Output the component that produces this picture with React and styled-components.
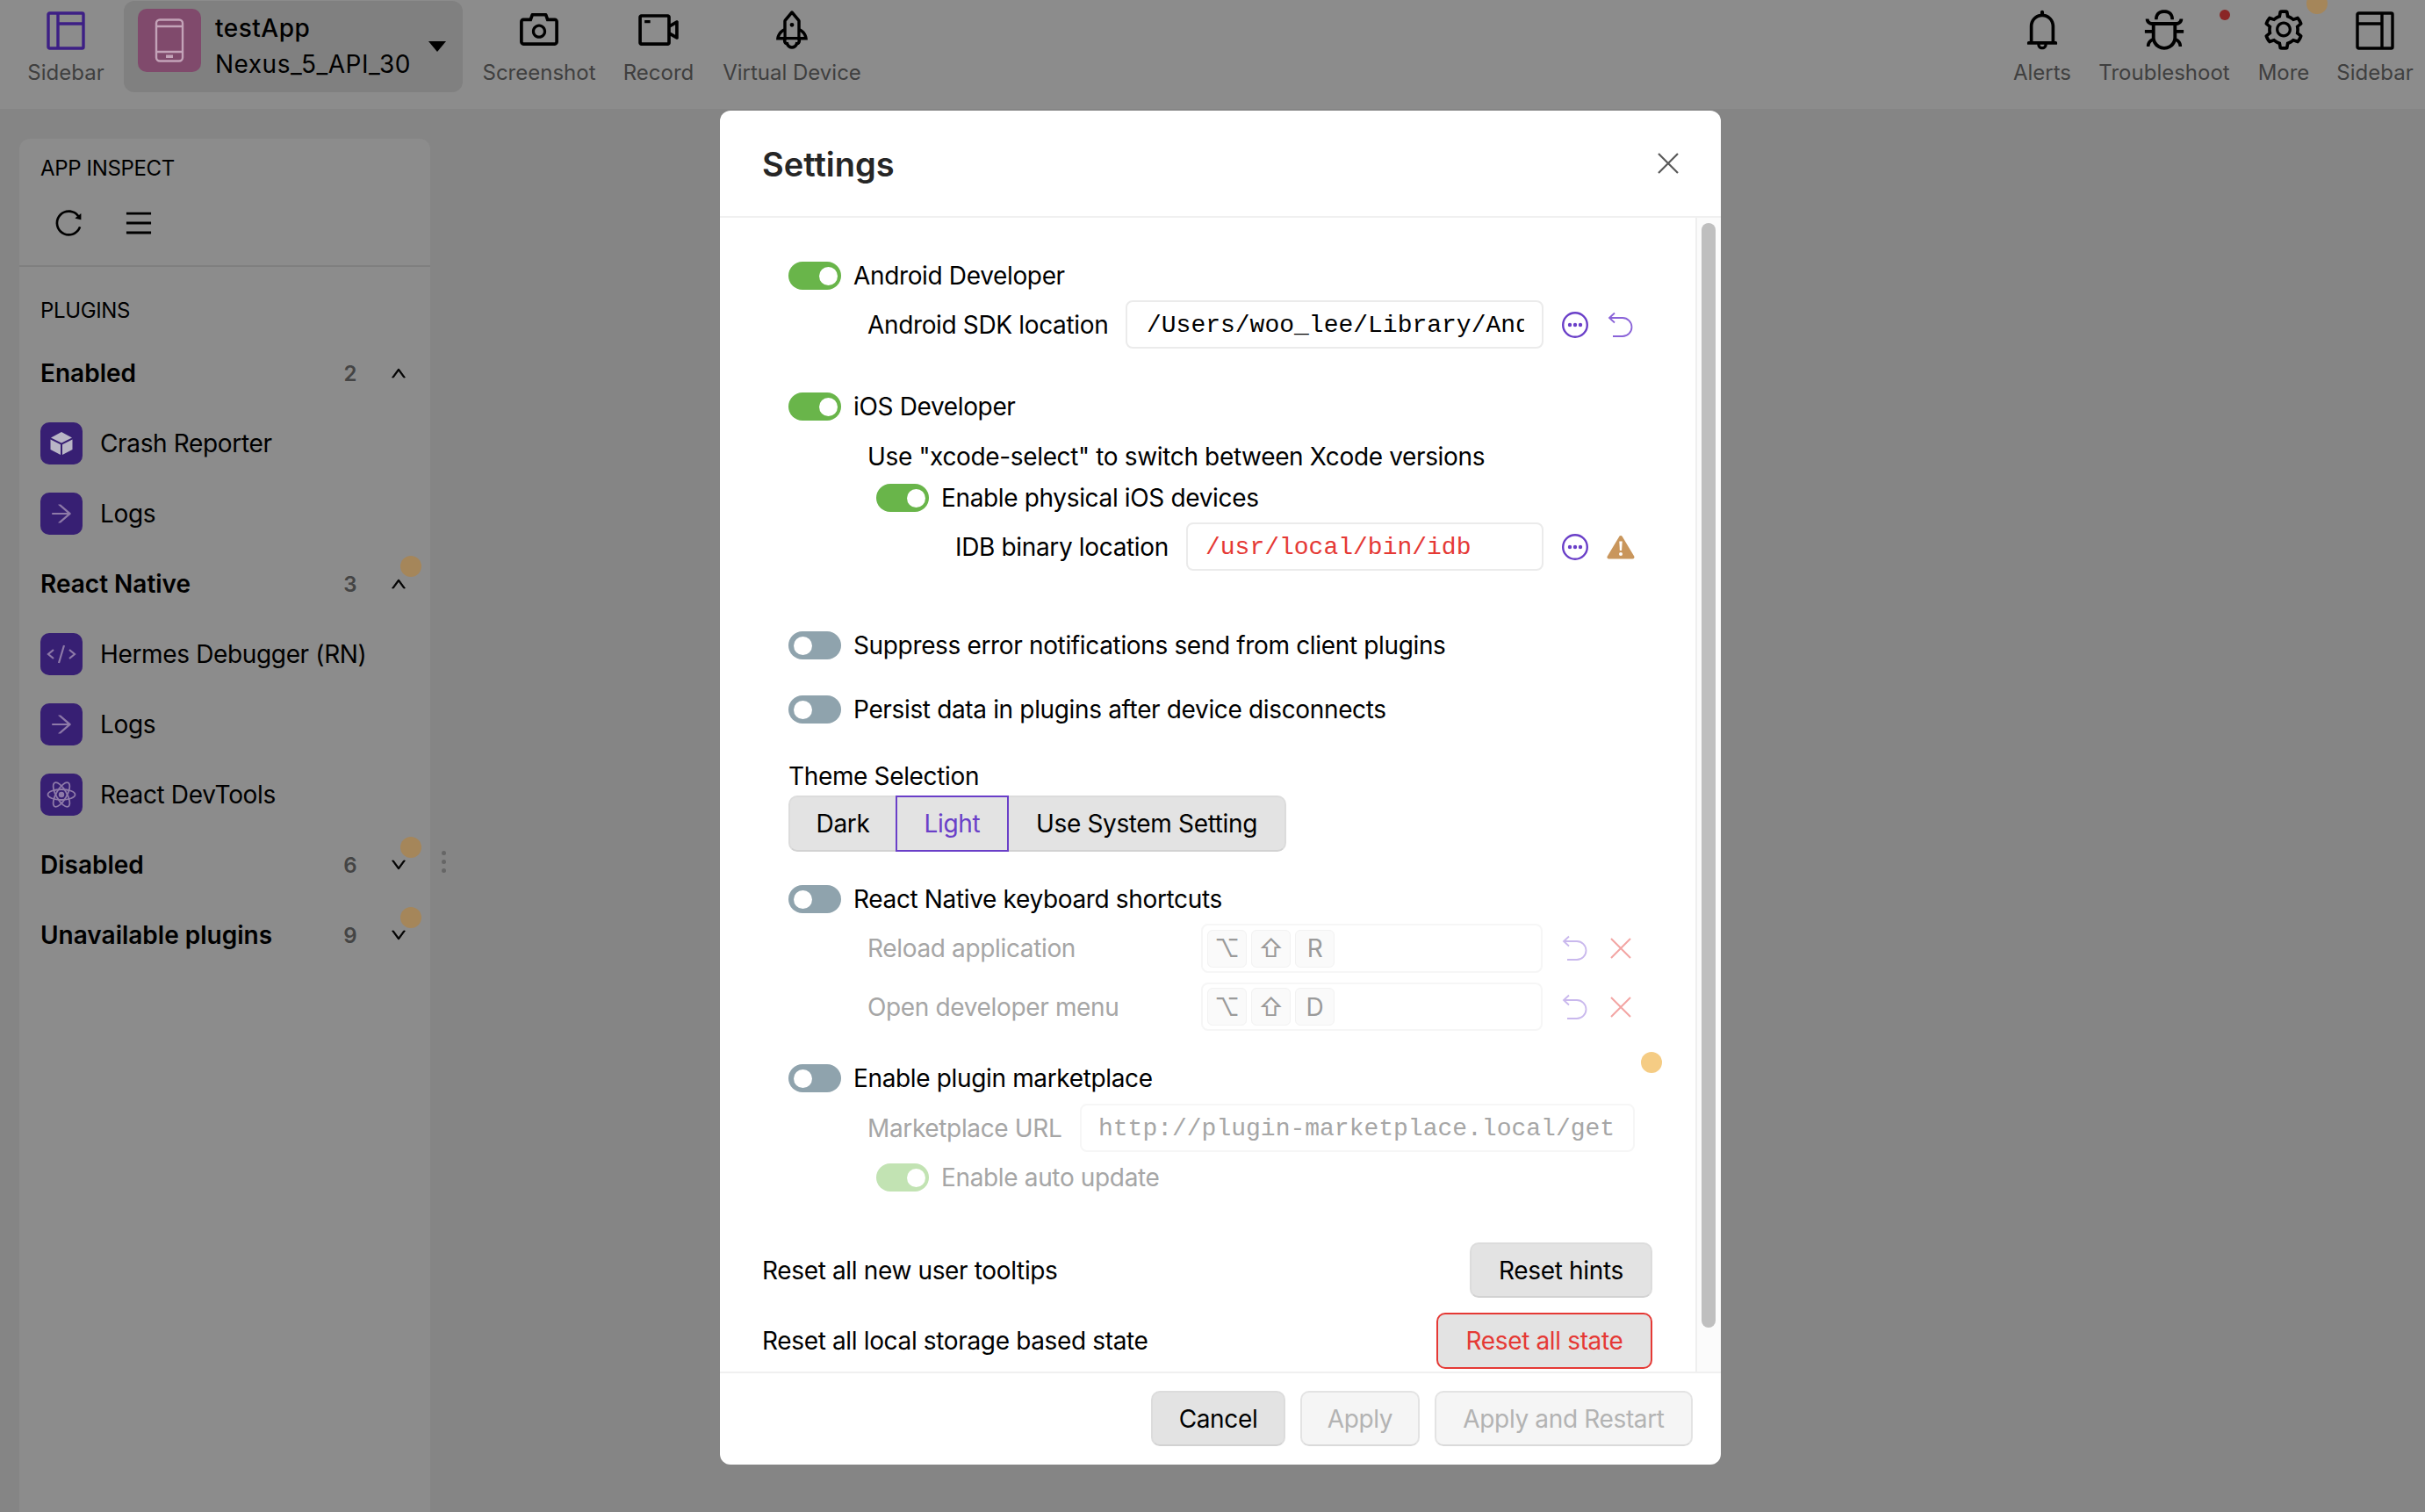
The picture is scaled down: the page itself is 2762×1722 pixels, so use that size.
import React from "react";
import styled, { createGlobalStyle } from "styled-components";
import {
  AiOutlineCamera, AiOutlineVideoCamera, AiOutlineRocket, AiOutlineBell, AiOutlineBug,
  AiOutlineSetting, AiOutlineReload, AiOutlineMenu, AiOutlineUp, AiOutlineDown,
  AiOutlineArrowRight,
} from "react-icons/ai";

const Global = createGlobalStyle`
  html, body { margin: 0; padding: 0; }
  body { width: 2762px; height: 1722px; overflow: hidden; background: #858585; font-family: Inter, "Noto Sans", sans-serif; color: #000; letter-spacing: -0.35px; }
  * { box-sizing: border-box; }
`;

const Page = styled.div`
  position: relative;
  width: 2762px;
  height: 1722px;
  display: flex;
  flex-direction: column;
`;

const Toolbar = styled.header`
  height: 124px;
  flex: none;
  background: #8c8c8c;
  display: flex;
  align-items: flex-start;
`;
const ToolGroup = styled.div`
  display: flex;
  align-items: flex-start;
  margin-left: ${(p) => p.$ml || 0}px;
`;
const ToolButton = styled.div`
  width: ${(p) => p.$w}px;
  margin-left: ${(p) => p.$ml || 0}px;
  margin-right: ${(p) => p.$mr || 0}px;
  height: 100px;
  display: flex;
  flex-direction: column;
  align-items: center;
  padding-top: ${(p) => p.$pt ?? 8}px;
  font-size: 24px;
  color: #3f3f3f;
  letter-spacing: 0;
  white-space: nowrap;
  position: relative;
  svg { display: block; color: ${(p) => p.$icon || "#000"}; }
`;
const ToolLabel = styled.span`
  position: absolute;
  top: 68px;
  line-height: 30px;
`;
const DevicePill = styled.div`
  width: 386px;
  height: 104px;
  margin: 1px 0 0 0;
  background: #808080;
  border-radius: 12px;
  display: flex;
  align-items: center;
  padding: 0 19px 0 16px;
  position: relative;
`;
const DeviceIcon = styled.div`
  width: 72px;
  height: 72px;
  margin-bottom: 14px;
  border-radius: 10px;
  background: #804a6c;
  display: flex;
  align-items: center;
  justify-content: center;
`;
const DeviceText = styled.div`
  margin-left: 16px;
  flex: 1;
  font-size: 28px;
  line-height: 41px;
  letter-spacing: 0.5px;
`;
const DeviceName = styled.div`
  font-weight: 500;
`;
const Caret = styled.div`
  width: 0;
  height: 0;
  border-left: 10px solid transparent;
  border-right: 10px solid transparent;
  border-top: 12px solid #000;
`;
const Spacer = styled.div`
  flex: 1;
`;
const Dot = styled.span`
  position: absolute;
  width: ${(p) => p.$d}px;
  height: ${(p) => p.$d}px;
  left: ${(p) => p.$x}px;
  top: ${(p) => p.$y}px;
  border-radius: 50%;
  background: ${(p) => p.$c};
`;

const Main = styled.main`
  flex: 1;
  padding: 34px 0 0 22px;
  display: flex;
`;
const Sidebar = styled.aside`
  width: 468px;
  background: #8c8c8c;
  border-radius: 12px 12px 0 0;
  position: relative;
`;
const SideHead = styled.div`
  height: 146px;
  border-bottom: 2px solid #7f7f7f;
  padding: 16px 24px 0;
`;
const Caption = styled.div`
  font-size: 24px;
  line-height: 36px;
  color: #000;
`;
const HeadIcons = styled.div`
  display: flex;
  gap: 44px;
  margin: 26px 0 0 14px;
  svg { display: block; }
`;
const PluginList = styled.div`
  padding: 32px 24px 0;
`;
const SectionRow = styled.div`
  height: 80px;
  display: flex;
  align-items: center;
  font-size: 28px;
  font-weight: 600;
  letter-spacing: 0;
  position: relative;
  margin-top: ${(p) => p.$mt || 0}px;
`;
const SectionName = styled.span`
  flex: 1;
`;
const Count = styled.span`
  font-size: 24px;
  font-weight: 600;
  color: #444;
  width: 16px;
  text-align: center;
  margin-right: 37px;
`;
const Chev = styled.span`
  width: 20px;
  margin-right: 2px;
  display: flex;
  justify-content: center;
  svg { display: block; stroke: currentColor; stroke-width: 40px; }
`;
const PluginRow = styled.div`
  height: 80px;
  display: flex;
  align-items: center;
  font-size: 28px;
  color: #000;
`;
const PluginIcon = styled.div`
  width: 48px;
  height: 48px;
  border-radius: 10px;
  background: #371f73;
  margin-right: 20px;
  display: flex;
  align-items: center;
  justify-content: center;
  svg { display: block; }
`;
const DragDots = styled.div`
  position: absolute;
  left: 481px;
  top: 811px;
  display: flex;
  flex-direction: column;
  gap: 5px;
  span { width: 5px; height: 5px; border-radius: 50%; background: #666; }
`;

const Modal = styled.section`
  position: absolute;
  left: 820px;
  top: 126px;
  width: 1140px;
  height: 1542px;
  background: #fff;
  border-radius: 12px;
  display: flex;
  flex-direction: column;
  overflow: hidden;
`;
const ModalHead = styled.div`
  height: 122px;
  flex: none;
  border-bottom: 2px solid #f0f0f0;
  padding: 2px 48px 0;
  display: flex;
  align-items: center;
  justify-content: space-between;
`;
const Title = styled.h2`
  margin: 0;
  font-size: 38px;
  font-weight: 600;
  color: #262626;
  line-height: 50px;
  letter-spacing: 0;
`;
const CloseBtn = styled.div`
  display: flex;
  margin: 0 0 3px 0;
  svg { display: block; }
`;
const ModalBody = styled.div`
  flex: 1;
  min-height: 0;
  display: flex;
  overflow: hidden;
`;
const Content = styled.div`
  flex: 1;
  padding-left: 48px;
`;
const ScrollTrack = styled.div`
  width: 29px;
  background: #fbfbfb;
  border-left: 2px solid #efefef;
  padding: 6px 5px 0 5px;
`;
const ScrollThumb = styled.div`
  width: 16px;
  height: 1258px;
  border-radius: 8px;
  background: #bfbfbf;
`;
const Row = styled.div`
  display: flex;
  align-items: center;
  margin-top: ${(p) => p.$mt}px;
  height: ${(p) => p.$h || 32}px;
  padding-left: ${(p) => 30 + (p.$pl || 0)}px;
  font-size: 28px;
  line-height: 32px;
  color: ${(p) => (p.$muted ? "#a6a6a6" : "#000")};
  white-space: nowrap;
`;
const Switch = styled.span`
  width: 60px;
  height: 32px;
  border-radius: 16px;
  flex: none;
  margin-right: 14px;
  background: ${(p) => (p.$faded ? "#c2e3b3" : p.$on ? "#69b54a" : "#8fa3ad")};
  display: flex;
  align-items: center;
  justify-content: ${(p) => (p.$on ? "flex-end" : "flex-start")};
  padding: ${(p) => (p.$on ? "0 4px 0 0" : "0 0 0 6px")};
  &::after {
    content: "";
    width: 21px;
    height: 21px;
    border-radius: 50%;
    background: #fff;
  }
`;
const FieldLabel = styled.span`
  width: ${(p) => p.$w}px;
  flex: none;
`;
const Input = styled.div`
  width: ${(p) => p.$w}px;
  height: 100%;
  flex: none;
  border: 2px solid ${(p) => (p.$muted ? "#f6f6f6" : "#ebebeb")};
  border-radius: 8px;
  padding: 3px ${(p) => p.$pr ?? 20}px 0 ${(p) => p.$pl ?? 20}px;
  display: flex;
  align-items: center;
  font-family: "Liberation Mono", monospace;
  font-size: 28px;
  letter-spacing: 0;
  overflow: hidden;
  color: ${(p) => p.$c || "#000"};
`;
const Clip = styled.span`
  display: block;
  overflow: hidden;
  white-space: nowrap;
  width: 100%;
`;
const IconSlot = styled.span`
  width: 32px;
  height: 32px;
  margin-left: ${(p) => p.$ml}px;
  flex: none;
  display: flex;
  align-items: center;
  justify-content: center;
  opacity: ${(p) => p.$o ?? 1};
  svg { display: block; }
`;
const Seg = styled.div`
  display: flex;
  height: 64px;
  margin: ${(p) => p.$mt}px 0 0 30px;
  width: 567px;
  background: #e3e3e3;
  border: 2px solid #dcdcdc;
  border-bottom-color: #d2d2d2;
  border-radius: 10px;
  font-size: 28px;
`;
const SegItem = styled.div`
  display: flex;
  align-items: center;
  justify-content: center;
  flex: ${(p) => (p.$w ? `0 0 ${p.$w}px` : "1")};
  margin: ${(p) => (p.$active ? "-2px 0" : "0")};
  border: ${(p) => (p.$active ? "2px solid #6a3fc8" : "0")};
  color: ${(p) => (p.$active ? "#6a3fc8" : "#000")};
`;
const KeyInput = styled.div`
  width: 389px;
  height: 100%;
  flex: none;
  border: 2px solid #f6f6f6;
  border-radius: 8px;
  padding-left: 5px;
  display: flex;
  align-items: center;
  gap: 5px;
`;
const KeyCap = styled.span`
  width: 45px;
  height: 43px;
  border-radius: 6px;
  background: #fafafa;
  border: 1px solid #f2f2f2;
  display: flex;
  align-items: center;
  justify-content: center;
  font-size: 28px;
  color: #9a9a9a;
  font-family: Inter, "DejaVu Sans", sans-serif;
`;
const ResetRow = styled.div`
  display: flex;
  align-items: center;
  justify-content: space-between;
  margin-top: ${(p) => p.$mt}px;
  height: ${(p) => p.$h}px;
  padding-right: 49px;
  font-size: 28px;
`;
const Button = styled.div`
  height: ${(p) => p.$h || 63}px;
  width: ${(p) => p.$w}px;
  flex: none;
  border-radius: 10px;
  display: flex;
  align-items: center;
  justify-content: center;
  font-size: 28px;
  white-space: nowrap;
  background: ${(p) => (p.$disabled ? "#f5f5f5" : "#e3e3e3")};
  border: 2px solid ${(p) => (p.$danger ? "#e53935" : p.$disabled ? "#e3e3e3" : "#dcdcdc")};
  border-bottom-color: ${(p) => (p.$danger ? "#e53935" : p.$disabled ? "#dadada" : "#d2d2d2")};
  color: ${(p) => (p.$danger ? "#e53935" : p.$disabled ? "#b3b3b3" : "#000")};
`;
const Footer = styled.div`
  height: 106px;
  flex: none;
  border-top: 2px solid #f0f0f0;
  display: flex;
  justify-content: flex-end;
  gap: 17px;
  padding: 20px 32px 0 0;
`;

const SidebarGlyph = ({ right, color }) => (
  <svg width="44" height="44" viewBox="0 0 44 44" fill="none" stroke={color} strokeWidth="3.4">
    <rect x="2" y="2" width="40" height="40" rx="1.5" />
    {right ? <path d="M30 2v40M2 14h28" /> : <path d="M13 2v40M13 14h29" />}
  </svg>
);
const Phone = () => (
  <svg width="34" height="50" viewBox="0 0 34 50" fill="none" stroke="#c3a3b8" strokeWidth="2.4">
    <rect x="2" y="1.5" width="30" height="47" rx="4" />
    <path d="M2 9h30M2 38h30" />
    <rect x="13" y="41.5" width="8" height="3.5" fill="#c3a3b8" stroke="none" />
  </svg>
);
const Cube = () => (
  <svg width="28" height="28" viewBox="0 0 28 28" fill="#b9b6c6">
    <path d="M14 1 26 7.5 14 13.5 2 7.5Z" />
    <path d="M1.5 9.5 13 15.3V27L1.5 21Z" />
    <path d="M26.5 9.5 15 15.3V27L26.5 21Z" />
  </svg>
);
const CodeGlyph = () => (
  <svg width="34" height="22" viewBox="0 0 34 22" fill="none" stroke="#8e7aa8" strokeWidth="2.2">
    <path d="M8 6 2 11l6 5M26 6l6 5-6 5M20 1l-6 20" />
  </svg>
);
const Atom = () => (
  <svg width="34" height="34" viewBox="0 0 34 34" fill="none" stroke="#8e7aa8" strokeWidth="1.8">
    <ellipse cx="17" cy="17" rx="15.5" ry="6" />
    <ellipse cx="17" cy="17" rx="15.5" ry="6" transform="rotate(60 17 17)" />
    <ellipse cx="17" cy="17" rx="15.5" ry="6" transform="rotate(120 17 17)" />
    <circle cx="17" cy="17" r="3.2" fill="#8e7aa8" stroke="none" />
  </svg>
);
const MoreCircle = () => (
  <svg width="30" height="30" viewBox="0 0 30 30">
    <circle cx="15" cy="15" r="13.8" fill="none" stroke="#6a3fc8" strokeWidth="2.4" />
    <circle cx="9" cy="15" r="2.2" fill="#6a3fc8" />
    <circle cx="15" cy="15" r="2.2" fill="#6a3fc8" />
    <circle cx="21" cy="15" r="2.2" fill="#6a3fc8" />
  </svg>
);
const UndoGlyph = () => (
  <svg width="30" height="30" viewBox="0 0 30 30" fill="none" stroke="#8a63d8" strokeWidth="1.8">
    <path d="M2 7H17a10.5 10.5 0 0 1 0 21H6" />
    <path d="M8 1.5 2 7l6 5.5" />
  </svg>
);
const Cross = ({ w, h, color, sw }) => (
  <svg width={w} height={h} viewBox={`0 0 ${w} ${h}`} fill="none" stroke={color} strokeWidth={sw}>
    <path d={`M1 1 ${w - 1} ${h - 1}M${w - 1} 1 1 ${h - 1}`} />
  </svg>
);
const WarnGlyph = () => (
  <svg width="32" height="28" viewBox="0 0 32 28">
    <path d="M16 3 2.5 25.5h27Z" fill="#c9965c" stroke="#c9965c" strokeWidth="4" strokeLinejoin="round" />
    <path d="M14.3 7.5h3.4l-.6 10.5h-2.2Z" fill="#fff" />
    <circle cx="16" cy="22" r="2" fill="#fff" />
  </svg>
);

const PLUGIN_ICON = { fill: "#8e7aa8", size: 30 };

const App = () => (
  <Page>
    <Global />
    <Toolbar>
      <ToolGroup $ml={32}>
        <ToolButton $w={86} $mr={23} $pt={13}>
          <SidebarGlyph color="#3d1f85" />
          <ToolLabel>Sidebar</ToolLabel>
        </ToolButton>
        <DevicePill>
          <DeviceIcon><Phone /></DeviceIcon>
          <DeviceText>
            <DeviceName>testApp</DeviceName>
            <div>Nexus_5_API_30</div>
          </DeviceText>
          <Caret />
        </DevicePill>
        <ToolButton $w={128} $ml={23} $mr={32}>
          <AiOutlineCamera size={52} />
          <ToolLabel>Screenshot</ToolLabel>
        </ToolButton>
        <ToolButton $w={80} $mr={34}>
          <AiOutlineVideoCamera size={52} />
          <ToolLabel>Record</ToolLabel>
        </ToolButton>
        <ToolButton $w={156}>
          <AiOutlineRocket size={52} />
          <ToolLabel>Virtual Device</ToolLabel>
        </ToolButton>
      </ToolGroup>
      <Spacer />
      <ToolGroup>
        <ToolButton $w={68} $mr={31}>
          <AiOutlineBell size={52} />
          <ToolLabel>Alerts</ToolLabel>
        </ToolButton>
        <ToolButton $w={148} $mr={33}>
          <AiOutlineBug size={52} />
          <ToolLabel>Troubleshoot</ToolLabel>
        </ToolButton>
        <ToolButton $w={58} $mr={32}>
          <AiOutlineSetting size={52} />
          <ToolLabel>More</ToolLabel>
        </ToolButton>
        <ToolButton $w={86} $mr={14} $pt={13}>
          <SidebarGlyph right color="#000" />
          <ToolLabel>Sidebar</ToolLabel>
        </ToolButton>
      </ToolGroup>
      <Dot $d={12} $x={2528} $y={11} $c="#8a2626" />
      <Dot $d={24} $x={2627} $y={-8} $c="#a5865a" />
    </Toolbar>
    <Main>
      <Sidebar>
        <SideHead>
          <Caption>APP INSPECT</Caption>
          <HeadIcons>
            <AiOutlineReload size={36} />
            <AiOutlineMenu size={36} />
          </HeadIcons>
        </SideHead>
        <PluginList>
          <Caption>PLUGINS</Caption>
          <SectionRow $mt={13}>
            <SectionName>Enabled</SectionName><Count>2</Count><Chev><AiOutlineUp size={20} /></Chev>
          </SectionRow>
          <PluginRow><PluginIcon><Cube /></PluginIcon>Crash Reporter</PluginRow>
          <PluginRow><PluginIcon><AiOutlineArrowRight color={PLUGIN_ICON.fill} size={PLUGIN_ICON.size} /></PluginIcon>Logs</PluginRow>
          <SectionRow>
            <SectionName>React Native</SectionName><Count>3</Count><Chev><AiOutlineUp size={20} /></Chev>
            <Dot $d={24} $x={410} $y={8} $c="#a5865a" />
          </SectionRow>
          <PluginRow><PluginIcon><CodeGlyph /></PluginIcon>Hermes Debugger (RN)</PluginRow>
          <PluginRow><PluginIcon><AiOutlineArrowRight color={PLUGIN_ICON.fill} size={PLUGIN_ICON.size} /></PluginIcon>Logs</PluginRow>
          <PluginRow><PluginIcon><Atom /></PluginIcon>React DevTools</PluginRow>
          <SectionRow>
            <SectionName>Disabled</SectionName><Count>6</Count><Chev><AiOutlineDown size={20} /></Chev>
            <Dot $d={24} $x={410} $y={8} $c="#a5865a" />
          </SectionRow>
          <SectionRow>
            <SectionName>Unavailable plugins</SectionName><Count>9</Count><Chev><AiOutlineDown size={20} /></Chev>
            <Dot $d={24} $x={410} $y={8} $c="#a5865a" />
          </SectionRow>
        </PluginList>
        <DragDots><span /><span /><span /></DragDots>
      </Sidebar>
    </Main>

    <Modal>
      <ModalHead>
        <Title>Settings</Title>
        <CloseBtn><Cross w={24} h={24} color="#595959" sw={2.2} /></CloseBtn>
      </ModalHead>
      <ModalBody>
        <Content>
          <Row $mt={50}><Switch $on />Android Developer</Row>
          <Row $mt={12} $h={55} $pl={90}>
            <FieldLabel $w={294}>Android SDK location</FieldLabel>
            <Input $w={476} $pl={22}><Clip>/Users/woo_lee/Library/Android/sdk</Clip></Input>
            <IconSlot $ml={20}><MoreCircle /></IconSlot>
            <IconSlot $ml={20}><UndoGlyph /></IconSlot>
          </Row>
          <Row $mt={50}><Switch $on />iOS Developer</Row>
          <Row $mt={25} $pl={90}>Use "xcode-select" to switch between Xcode versions</Row>
          <Row $mt={15} $pl={100}><Switch $on />Enable physical iOS devices</Row>
          <Row $mt={12} $h={55} $pl={190}>
            <FieldLabel $w={263}>IDB binary location</FieldLabel>
            <Input $w={407} $c="#e53935"><Clip>/usr/local/bin/idb</Clip></Input>
            <IconSlot $ml={20}><MoreCircle /></IconSlot>
            <IconSlot $ml={20}><WarnGlyph /></IconSlot>
          </Row>
          <Row $mt={69}><Switch />Suppress error notifications send from client plugins</Row>
          <Row $mt={41}><Switch />Persist data in plugins after device disconnects</Row>
          <Row $mt={44}>Theme Selection</Row>
          <Seg $mt={6}>
            <SegItem $w={120}>Dark</SegItem>
            <SegItem $w={129} $active>Light</SegItem>
            <SegItem>Use System Setting</SegItem>
          </Seg>
          <Row $mt={38}><Switch />React Native keyboard shortcuts</Row>
          <Row $mt={12} $h={56} $pl={90} $muted>
            <FieldLabel $w={380}>Reload application</FieldLabel>
            <KeyInput><KeyCap>⌥</KeyCap><KeyCap>⇧</KeyCap><KeyCap>R</KeyCap></KeyInput>
            <IconSlot $ml={21} $o={0.45}><UndoGlyph /></IconSlot>
            <IconSlot $ml={20} $o={0.45}><Cross w={24} h={24} color="#e53935" sw={2} /></IconSlot>
          </Row>
          <Row $mt={11} $h={55} $pl={90} $muted>
            <FieldLabel $w={380}>Open developer menu</FieldLabel>
            <KeyInput><KeyCap>⌥</KeyCap><KeyCap>⇧</KeyCap><KeyCap>D</KeyCap></KeyInput>
            <IconSlot $ml={21} $o={0.45}><UndoGlyph /></IconSlot>
            <IconSlot $ml={20} $o={0.45}><Cross w={24} h={24} color="#e53935" sw={2} /></IconSlot>
          </Row>
          <Row $mt={38}><Switch />Enable plugin marketplace</Row>
          <Row $mt={13} $h={55} $pl={90} $muted>
            <FieldLabel $w={242}>Marketplace URL</FieldLabel>
            <Input $w={632} $muted $c="#a6a6a6" $pl={19} $pr={8}><Clip>http://plugin-marketplace.local/get</Clip></Input>
          </Row>
          <Row $mt={13} $pl={100} $muted><Switch $on $faded />Enable auto update</Row>
          <ResetRow $mt={58} $h={63}>
            <span>Reset all new user tooltips</span>
            <Button $w={208}>Reset hints</Button>
          </ResetRow>
          <ResetRow $mt={17} $h={64}>
            <span>Reset all local storage based state</span>
            <Button $w={246} $h={64} $danger>Reset all state</Button>
          </ResetRow>
        </Content>
        <ScrollTrack><ScrollThumb /></ScrollTrack>
      </ModalBody>
      <Footer>
        <Button $w={153}>Cancel</Button>
        <Button $w={136} $disabled>Apply</Button>
        <Button $w={294} $disabled>Apply and Restart</Button>
      </Footer>
      <Dot $d={24} $x={1049} $y={1072} $c="#f5cc84" />
    </Modal>
  </Page>
);

export default App;
